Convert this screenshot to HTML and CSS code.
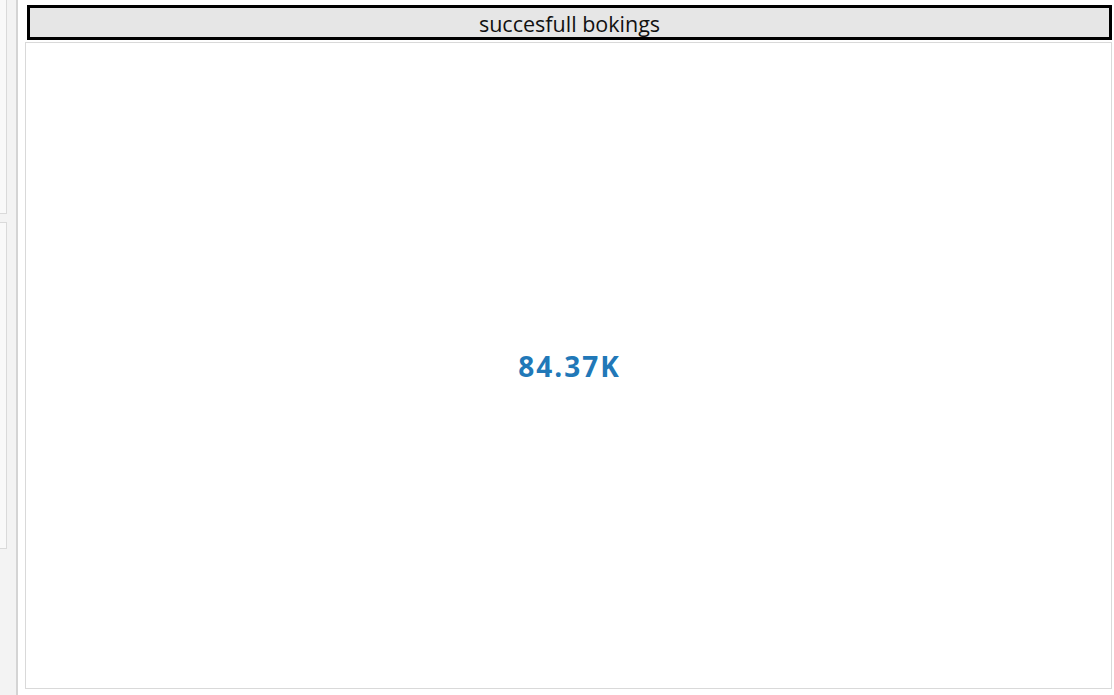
FILE: index.html
```html
<!DOCTYPE html>
<html>
<head>
<meta charset="utf-8">
<link rel="stylesheet" href="styles.css">
</head>
<body>
<div class="page">
  <aside class="side">
    <div class="side-panel side-panel-top"></div>
    <div class="side-panel side-panel-mid"></div>
  </aside>
  <div class="divider"></div>
  <main class="main">
    <div class="title-box">succesfull bokings</div>
    <section class="card">
      <div class="kpi">84.37K</div>
    </section>
  </main>
</div>
</body>
</html>
```

FILE: styles.css
```css
html, body {
  margin: 0;
  padding: 0;
  background: #ffffff;
  width: 1114px;
  height: 695px;
  overflow: hidden;
}

.page {
  display: flex;
  width: 1114px;
  height: 695px;
}

.side {
  width: 16px;
  background: #f3f3f3;
  display: flex;
  flex-direction: column;
}

.side-panel {
  width: 6px;
  background: #f9f9f9;
  border-right: 1px solid #dadada;
  border-bottom: 1px solid #dadada;
  border-top: 1px solid #dadada;
}

.side-panel-top {
  height: 213px;
  border-top: none;
}

.side-panel-mid {
  margin-top: 8px;
  height: 325px;
}

.divider {
  width: 2px;
  background: #d4d4d4;
}

.main {
  flex: 1;
  padding: 5px 2px 0 7px;
  display: flex;
  flex-direction: column;
}

.title-box {
  margin-left: 2px;
  height: 28px;
  padding-top: 1px;
  border: 3px solid #000000;
  background: #e6e6e6;
  font-family: "Open Sans", "Noto Sans", sans-serif;
  font-size: 21.5px;
  line-height: 29px;
  text-align: center;
  color: #111111;
  overflow: hidden;
}

.card {
  margin-top: 2px;
  height: 645px;
  border: 1px solid #d9d9d9;
  display: flex;
  align-items: center;
  justify-content: center;
}

.kpi {
  font-family: "Open Sans", "Noto Sans", sans-serif;
  font-weight: 700;
  font-size: 28px;
  letter-spacing: 2px;
  padding-left: 2px;
  color: #2178b8;
}
```
